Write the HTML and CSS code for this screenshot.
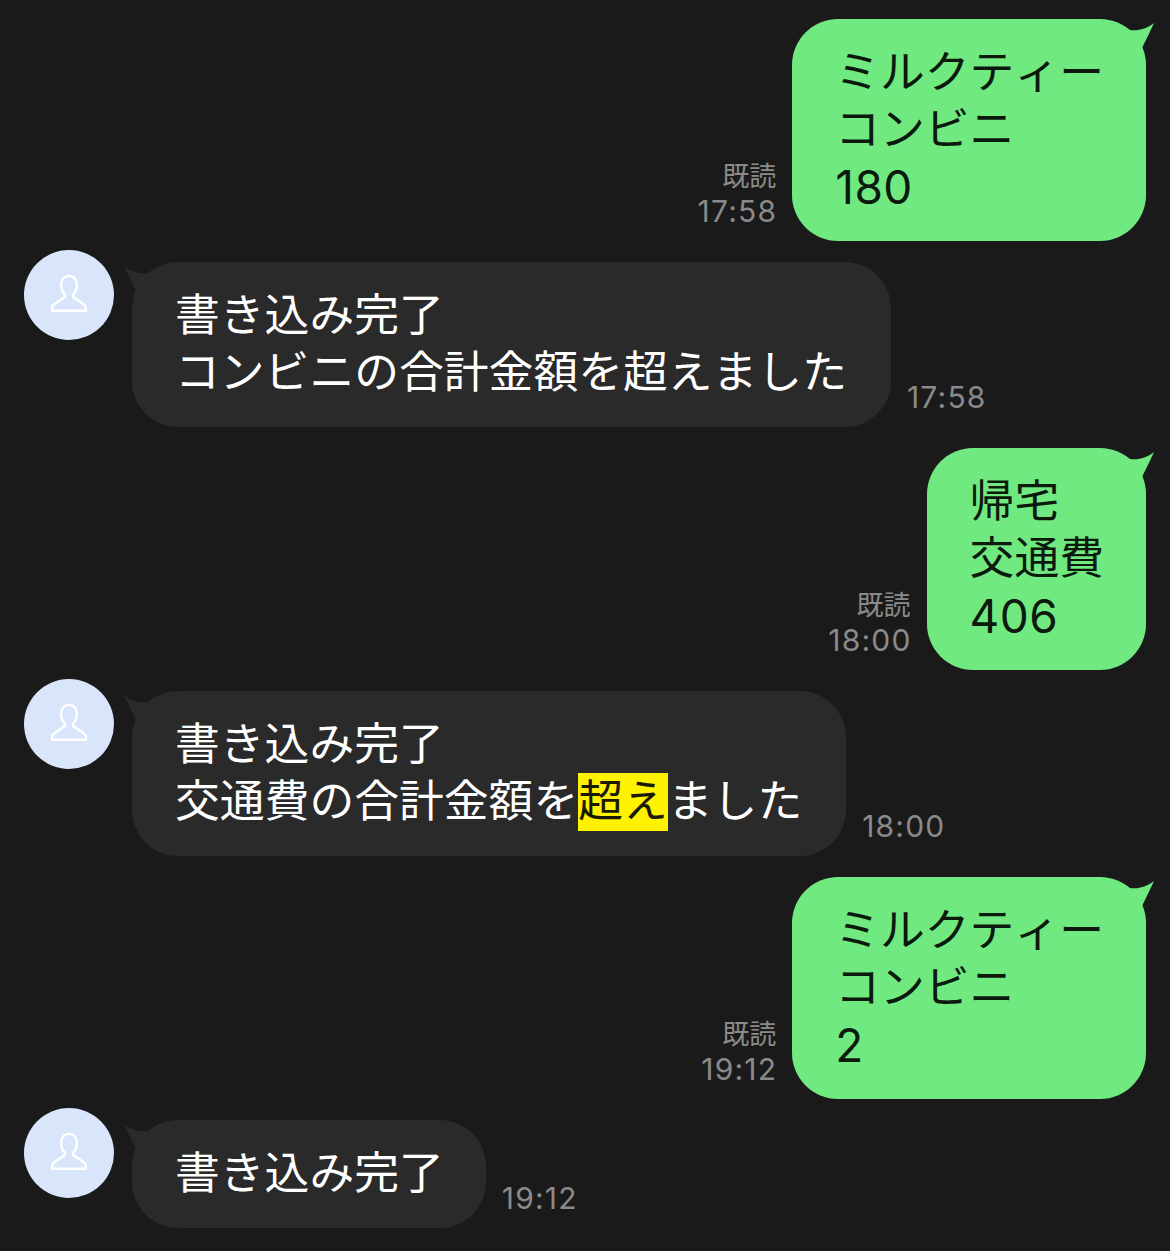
FILE: index.html
```html
<!DOCTYPE html>
<html lang="ja">
<head>
    <meta charset="UTF-8">
    <meta name="viewport" content="width=device-width, initial-scale=1.0">
    <title>トーク</title>
    <link rel="stylesheet" href="styles.css">
</head>
<body>
    <div class="chat">
        <div class="row row-out">
            <div class="meta"><span class="read">既読</span><span class="time">17:58</span></div>
            <div class="bubble bubble-out">
                <svg class="tail tail-out" viewBox="0 0 30 30"><path d="M0 9C8 13 20 12 30 4Q25 15 18 29L0 29Z"/></svg>
                ミルクティー<br>コンビニ<br><span class="num">180</span>
            </div>
        </div>
        <div class="row row-in">
            <div class="avatar"><svg class="avatar-icon" viewBox="0 0 40 40"><path d="M20 2C15 2 12.5 6 12.5 10.5C12.5 14.5 14.5 18 16 19.5L16 22C12 25 6 28 4 31L4 35H36V31C34 28 28 25 24 22L24 19.5C25.5 18 27.5 14.5 27.5 10.5C27.5 6 25 2 20 2Z"/></svg></div>
            <div class="bubble bubble-in bubble-wide">
                <svg class="tail tail-in" viewBox="0 0 30 30"><path d="M30 9C22 13 10 12 0 4Q5 15 12 29L30 29Z"/></svg>
                書き込み完了<br>コンビニの合計金額を超えました
            </div>
            <div class="meta"><span class="time">17:58</span></div>
        </div>
        <div class="row row-out">
            <div class="meta"><span class="read">既読</span><span class="time">18:00</span></div>
            <div class="bubble bubble-out">
                <svg class="tail tail-out" viewBox="0 0 30 30"><path d="M0 9C8 13 20 12 30 4Q25 15 18 29L0 29Z"/></svg>
                帰宅<br>交通費<br><span class="num">406</span>
            </div>
        </div>
        <div class="row row-in">
            <div class="avatar"><svg class="avatar-icon" viewBox="0 0 40 40"><path d="M20 2C15 2 12.5 6 12.5 10.5C12.5 14.5 14.5 18 16 19.5L16 22C12 25 6 28 4 31L4 35H36V31C34 28 28 25 24 22L24 19.5C25.5 18 27.5 14.5 27.5 10.5C27.5 6 25 2 20 2Z"/></svg></div>
            <div class="bubble bubble-in bubble-wide">
                <svg class="tail tail-in" viewBox="0 0 30 30"><path d="M30 9C22 13 10 12 0 4Q5 15 12 29L30 29Z"/></svg>
                書き込み完了<br>交通費の合計金額を<span class="mark">超え</span>ました
            </div>
            <div class="meta"><span class="time">18:00</span></div>
        </div>
        <div class="row row-out">
            <div class="meta"><span class="read">既読</span><span class="time">19:12</span></div>
            <div class="bubble bubble-out">
                <svg class="tail tail-out" viewBox="0 0 30 30"><path d="M0 9C8 13 20 12 30 4Q25 15 18 29L0 29Z"/></svg>
                ミルクティー<br>コンビニ<br><span class="num">2</span>
            </div>
        </div>
        <div class="row row-in">
            <div class="avatar"><svg class="avatar-icon" viewBox="0 0 40 40"><path d="M20 2C15 2 12.5 6 12.5 10.5C12.5 14.5 14.5 18 16 19.5L16 22C12 25 6 28 4 31L4 35H36V31C34 28 28 25 24 22L24 19.5C25.5 18 27.5 14.5 27.5 10.5C27.5 6 25 2 20 2Z"/></svg></div>
            <div class="bubble bubble-in">
                <svg class="tail tail-in" viewBox="0 0 30 30"><path d="M30 9C22 13 10 12 0 4Q5 15 12 29L30 29Z"/></svg>
                書き込み完了
            </div>
            <div class="meta"><span class="time">19:12</span></div>
        </div>
    </div>
</body>
</html>
```
FILE: styles.css
```css
html, body {
    margin: 0;
    height: 100%;
    background-color: #1a1a1a;
}
body {
    font-family: Inter, "Noto Sans CJK JP", sans-serif;
    overflow: hidden;
}
.chat {
    display: flex;
    flex-direction: column;
    gap: 21px;
    padding: 19px 24px 0;
}
.row {
    display: flex;
    align-items: flex-end;
    gap: 16px;
}
.row-out { justify-content: flex-end; }
.bubble {
    position: relative;
    padding: 25px 42px 26px 43px;
    border-radius: 46px;
    font-size: 44.8px;
    line-height: 57px;
    font-kerning: none;
    white-space: nowrap;
}
.bubble-out {
    background-color: #70e980;
    color: #0c1a0e;
}
.bubble-in {
    background-color: #2a2a2a;
    color: #fff;
}
.bubble-wide { padding-right: 44px; }
.num {
    font-size: 46px;
    line-height: 0;
    letter-spacing: 0.5px;
    vertical-align: -2px;
}
.tail {
    position: absolute;
    top: 0;
    width: 30px;
    height: 30px;
}
.tail-out { right: -8px; fill: #70e980; }
.tail-in { left: -8px; fill: #2a2a2a; }
.meta {
    display: flex;
    flex-direction: column;
    align-items: flex-end;
    padding-bottom: 12px;
    color: #8a8a8a;
}
.read {
    font-size: 27px;
    line-height: 32px;
}
.time {
    margin-right: -1px;
    font-size: 30px;
    line-height: 36px;
    letter-spacing: 1.2px;
}
.avatar {
    flex: none;
    display: flex;
    align-items: center;
    justify-content: center;
    align-self: flex-start;
    width: 90px;
    height: 90px;
    margin: -12px 2px 0 0;
    border-radius: 50%;
    background-color: #d8e5fb;
}
.avatar-icon {
    width: 42px;
    height: 42px;
    fill: none;
    stroke: #fff;
    stroke-width: 2.4;
}
.mark {
    display: inline-block;
    height: 58px;
    margin-bottom: -1px;
    vertical-align: top;
    background-color: #fff200;
    color: #1a1a00;
}
```
